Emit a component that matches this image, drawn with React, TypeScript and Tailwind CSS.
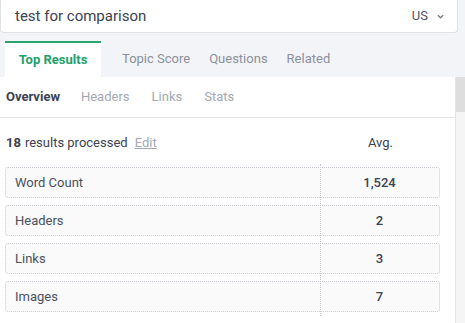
import React from "react";

const rows = [
  { label: "Word Count", value: "1,524" },
  { label: "Headers", value: "2" },
  { label: "Links", value: "3" },
  { label: "Images", value: "7" },
];

export default function App() {
  return (
    <div
      className="w-[465px] h-[323px] overflow-hidden bg-[#f3f4f8] flex flex-col"
      style={{ fontFamily: "Roboto, 'Liberation Sans', sans-serif" }}
    >
      {/* Search box */}
      <div className="w-[458px] h-[33px] shrink-0 bg-white border border-t-0 border-[#dfe1e6] rounded-b-[4px] flex items-center pl-[14px] pr-[12px]">
        <span className="text-[15px] text-[#3b4250] flex-1">test for comparison</span>
        <span className="text-[13px] text-[#4b5260]">US</span>
        <svg className="ml-[8px]" width="9" height="9" viewBox="0 0 10 10">
          <path d="M2 3.5 L5 6.5 L8 3.5" fill="none" stroke="#7b818c" strokeWidth="1.6" />
        </svg>
      </div>

      {/* Tabs */}
      <div className="mt-[8px] h-[36px] shrink-0 flex items-stretch pl-[5px] text-[13px]">
        <div className="w-[96px] bg-white border-t-2 border-[#2aa56e] flex items-center justify-center font-bold text-[#22a06b]">
          Top Results
        </div>
        <div className="ml-[21px] flex items-center text-[#8b909a]">Topic Score</div>
        <div className="ml-[19px] flex items-center text-[#8b909a]">Questions</div>
        <div className="ml-[19px] flex items-center text-[#8b909a]">Related</div>
      </div>

      {/* Body */}
      <div className="flex flex-1">
        <div className="w-[456px] bg-white border-r border-[#e3e4e8] flex flex-col">
          <div className="h-[41px] shrink-0 border-b border-[#e5e7eb] flex items-center pl-[6px] text-[13px]">
            <span className="font-bold text-[#3b4250]">Overview</span>
            <span className="ml-[21px] text-[#a3a8b0]">Headers</span>
            <span className="ml-[22px] text-[#a3a8b0]">Links</span>
            <span className="ml-[22px] text-[#a3a8b0]">Stats</span>
          </div>

          <div className="relative pl-[5px] pr-[15px]">
            <div className="h-[49px] flex items-center text-[13px] text-[#3b4250] pl-[1px]">
              <span className="font-bold">18</span>
              <span className="ml-[4px]">results processed</span>
              <span className="ml-[7px] underline text-[#a3a8b0]">Edit</span>
              <span className="ml-auto w-[119px] text-center text-[#3b4250]">Avg.</span>
            </div>
            <div className="absolute left-[320px] top-[46px] h-[152px] border-l border-dotted border-[#c8cacf]" />
            <div className="flex flex-col gap-[7px]">
              {rows.map((r) => (
                <div
                  key={r.label}
                  className="h-[31px] w-[435px] flex items-center bg-[#fafafa] border border-dotted border-[#c8cacf] rounded-[3px] text-[13px]"
                >
                  <span className="flex-1 pl-[9px] text-[#4a505c]">{r.label}</span>
                  <span className="w-[119px] text-center font-medium text-[#3b4250]">{r.value}</span>
                </div>
              ))}
            </div>
          </div>
        </div>
        {/* Scrollbar */}
        <div className="flex-1 bg-[#f5f5f5] flex flex-col">
          <div className="h-[35px] bg-[#dedede]" />
        </div>
      </div>
    </div>
  );
}
